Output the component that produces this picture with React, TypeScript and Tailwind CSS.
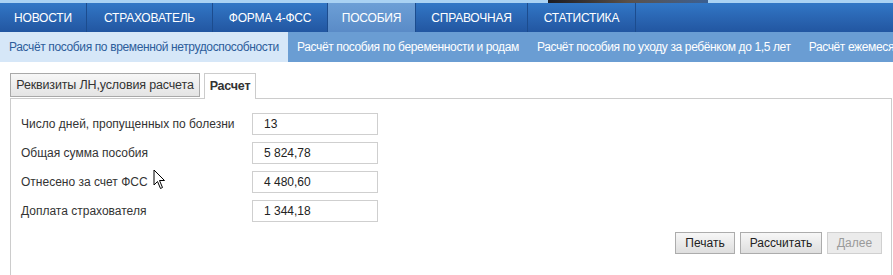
import type { ReactNode } from 'react'

const NAV = [
  { label: 'НОВОСТИ', w: 'w-[87px]' },
  { label: 'СТРАХОВАТЕЛЬ', w: 'w-[126px]' },
  { label: 'ФОРМА 4-ФСС', w: 'w-[115px]' },
  { label: 'ПОСОБИЯ', w: 'w-[88px]', active: true },
  { label: 'СПРАВОЧНАЯ', w: 'w-[112px]' },
  { label: 'СТАТИСТИКА', w: 'w-[108px]' },
]

const SUBNAV = [
  { label: 'Расчёт пособия по временной нетрудоспособности', active: true },
  { label: 'Расчёт пособия по беременности и родам' },
  { label: 'Расчёт пособия по уходу за ребёнком до 1,5 лет' },
  { label: 'Расчёт ежемесячного пособия' },
]

const ROWS = [
  { label: 'Число дней, пропущенных по болезни', value: '13' },
  { label: 'Общая сумма пособия', value: '5 824,78' },
  { label: 'Отнесено за счет ФСС', value: '4 480,60' },
  { label: 'Доплата страхователя', value: '1 344,18' },
]

function Button({ children, w, disabled }: { children: ReactNode; w: string; disabled?: boolean }) {
  return (
    <button
      disabled={disabled}
      className={`${w} flex h-[22px] items-center justify-center border text-[12px] leading-none ${
        disabled
          ? 'border-[#d0d0d0] bg-[#ebebeb] text-[#9a9a9a]'
          : 'border-[#acacac] bg-gradient-to-b from-[#f7f7f7] to-[#dedede] text-[#222]'
      }`}
    >
      {children}
    </button>
  )
}

function Cursor() {
  return (
    <svg className="absolute left-[153px] top-[169px]" width="14" height="21" viewBox="0 0 14 21">
      <path
        d="M1 1 L1 16 L4.5 12.5 L7.5 19.5 L9.5 18.5 L6.5 11.5 L11.5 11.5 Z"
        fill="#fff"
        stroke="#000"
        strokeWidth="1"
      />
    </svg>
  )
}

export default function App() {
  return (
    <div className="relative w-[893px] h-[275px] overflow-hidden bg-white font-['Liberation_Sans',Arial,sans-serif]">
      {/* header picture strip */}
      <div className="flex h-[3px] bg-[#a9d2f3]">
        <div className="w-[548px]" />
        <div className="w-[160px] bg-gradient-to-r from-[#1c1c22] via-[#5a5048] to-[#3a5f92]" />
      </div>

      {/* main menu */}
      <div className="flex h-[29px] bg-gradient-to-b from-[#3177c6] via-[#2a66b3] to-[#2256a1]">
        {NAV.map((item) => (
          <div
            key={item.label}
            className={`${item.w} flex items-center justify-center border-r border-[#1c4c8e] text-[12px] tracking-[-0.2px] text-white ${
              item.active ? 'bg-gradient-to-b from-[#6c9fd6] to-[#5a8bc7]' : ''
            }`}
          >
            {item.label}
          </div>
        ))}
      </div>

      {/* sub menu */}
      <div className="flex h-[30px] bg-[#6a9dd3] whitespace-nowrap">
        {SUBNAV.map((item) => (
          <div
            key={item.label}
            className={`flex items-center px-[9px] text-[12px] tracking-[-0.37px] ${
              item.active ? 'bg-[#d6e7f8] text-[#2d5d9b]' : 'text-white'
            }`}
          >
            {item.label}
          </div>
        ))}
      </div>

      {/* tabs */}
      <div className="pl-[10px] pt-[11px]">
        <div className="flex items-end gap-[4px]">
          <div className="mb-px flex h-[24px] w-[190px] items-center justify-center border border-[#a9a9a9] bg-gradient-to-b from-[#f7f7f7] to-[#e4e4e4] text-[12.5px] tracking-[-0.15px] text-[#333]">
            Реквизиты ЛН,условия расчета
          </div>
          <div className="relative -mb-px flex h-[26px] w-[52px] items-center justify-center border border-b-0 border-[#cccccc] bg-white text-[12.5px] font-bold tracking-[-0.2px] text-[#333]">
            Расчет
          </div>
        </div>

        {/* panel */}
        <div className="w-[882px] h-[200px] border border-b-0 border-[#cccccc] pl-[10px] pr-[9px] pt-[14px]">
          <div className="flex flex-col gap-[7px]">
            {ROWS.map((row) => (
              <div key={row.label} className="flex items-center">
                <div className="w-[231px] text-[12px] text-[#333]">{row.label}</div>
                <div className="flex h-[22px] w-[126px] items-center border border-[#cfcfcf] px-[11px] text-[12px] text-[#222]">
                  {row.value}
                </div>
              </div>
            ))}
          </div>
          <div className="mt-[10px] flex justify-end gap-[5px]">
            <Button w="w-[60px]">Печать</Button>
            <Button w="w-[82px]">Рассчитать</Button>
            <Button w="w-[55px]" disabled>
              Далее
            </Button>
          </div>
        </div>
      </div>

      <Cursor />
    </div>
  )
}
